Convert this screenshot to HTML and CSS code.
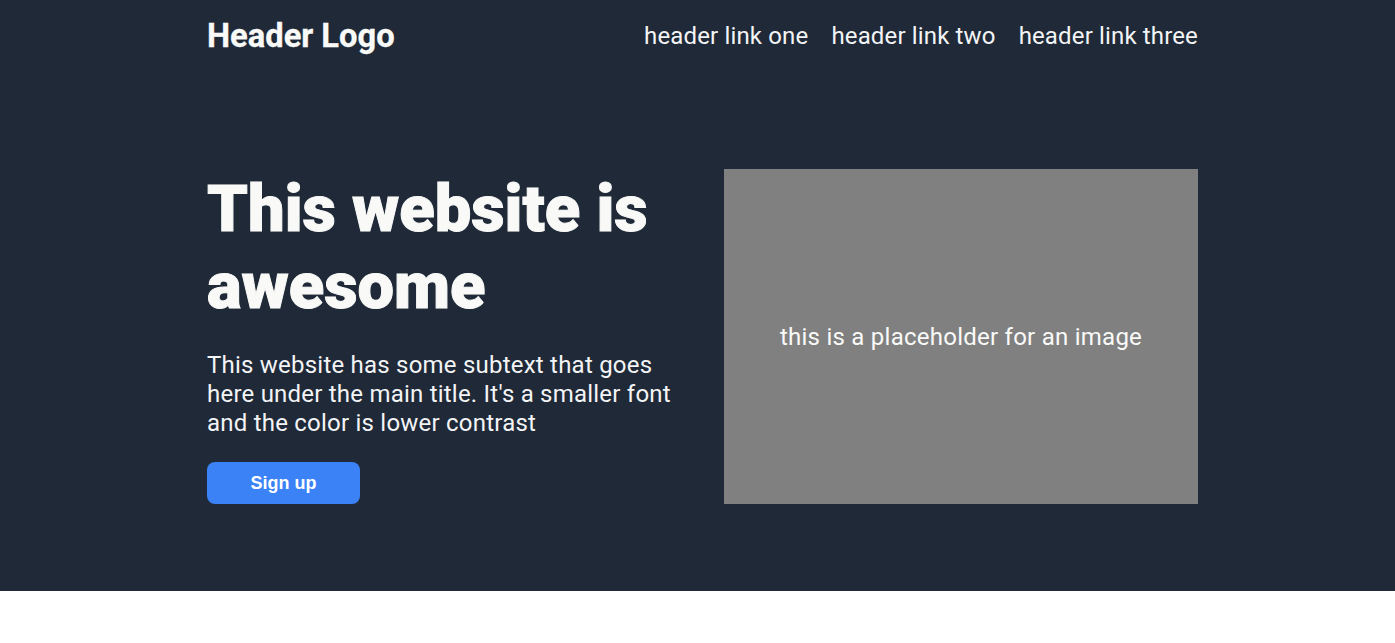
FILE: index.html
```html
<!DOCTYPE html>
<html lang="en">
<head>
<meta charset="utf-8">
<title>Landing page</title>
<link rel="stylesheet" href="styles.css">
</head>
<body>
  <div class="top">
    <header class="container header">
      <div class="logo">Header Logo</div>
      <nav class="links">
        <a href="#">header link one</a>
        <a href="#">header link two</a>
        <a href="#">header link three</a>
      </nav>
    </header>
    <section class="container hero">
      <div class="hero-text">
        <h1>This website is awesome</h1>
        <p>This website has some subtext that goes here under the main title. It's a smaller font and the color is lower contrast</p>
        <button class="btn">Sign up</button>
      </div>
      <div class="placeholder">this is a placeholder for an image</div>
    </section>
  </div>
</body>
</html>
```

FILE: styles.css
```css
body {
  margin: 0;
  font-family: Roboto, "Liberation Sans", sans-serif;
  background: #ffffff;
}

.top {
  background: #1f2937;
  padding-bottom: 86.6px;
}

.container {
  width: 991px;
  margin-left: calc(50% - 490.5px);
}

.header {
  display: flex;
  justify-content: space-between;
  align-items: center;
  height: 72px;
}

.logo {
  color: #f9faf8;
  font-size: 32.7px;
  font-weight: 700;
  -webkit-text-stroke: 0.3px #f9faf8;
}

.links {
  display: flex;
  gap: 23px;
}

.links a {
  color: #f3f4f6;
  font-size: 24px;
  letter-spacing: 0.15px;
  text-decoration: none;
}

.hero {
  display: flex;
  justify-content: space-between;
  align-items: flex-start;
  padding-top: 97px;
}

.hero-text {
  width: 470px;
  padding-top: 2px;
  display: flex;
  flex-direction: column;
  align-items: flex-start;
}

.hero h1 {
  margin: 0 0 26px;
  color: #f9faf8;
  font-size: 65px;
  font-weight: 900;
  line-height: 77px;
  -webkit-text-stroke: 1px #f9faf8;
}

.hero p {
  margin: 0 0 25px;
  color: #f3f4f6;
  font-size: 24px;
  letter-spacing: 0.22px;
  line-height: 1.2;
}

.btn {
  width: 153px;
  height: 42px;
  border: none;
  border-radius: 8px;
  background: #3b82f6;
  color: #ffffff;
  font-family: "Liberation Sans", Arial, sans-serif;
  font-size: 18px;
  font-weight: 700;
}

.placeholder {
  width: 474px;
  height: 335px;
  background: #808080;
  color: #f9faf8;
  font-size: 24px;
  letter-spacing: 0.25px;
  display: flex;
  align-items: center;
  justify-content: center;
}
```
